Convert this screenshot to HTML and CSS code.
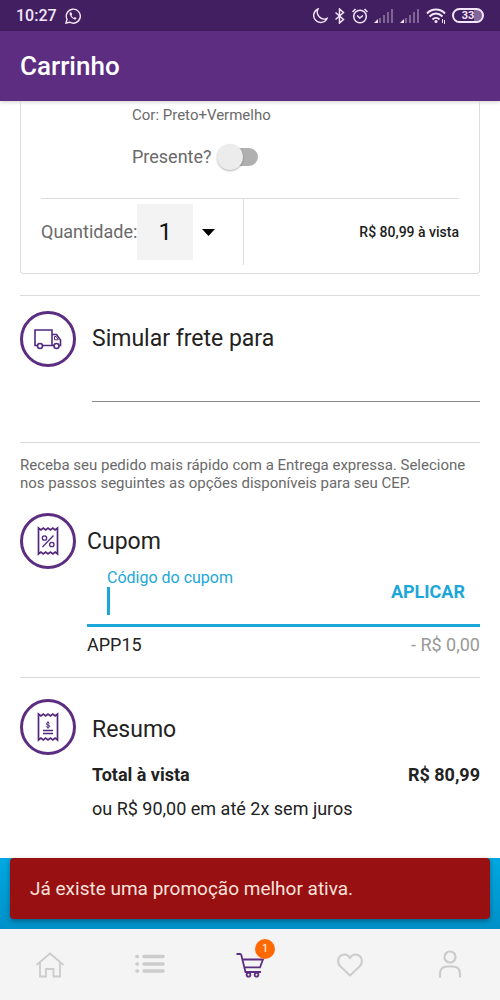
FILE: index.html
```html
<!DOCTYPE html>
<html lang="pt-BR">
<head>
<meta charset="utf-8">
<meta name="viewport" content="width=device-width, initial-scale=1">
<title>Carrinho</title>
<link rel="stylesheet" href="styles.css">
</head>
<body>
<div class="status">
  <div class="status-group">
    <span class="clock">10:27</span>
    <svg width="16" height="16" viewBox="0 0 16 16" fill="none" stroke="currentColor" stroke-width="1.4"><path d="M1 15l1-3.8A7 7 0 1 1 4.800 14.200Z"/><path d="M5.200 4.300c-.7.7-.8 1.600 0 3.200 1 2 2.600 3.400 4.300 3.900 1 .2 2-.5 2-1.500L9.800 9l-1 .9C7.700 9.300 7 8.500 6.500 7.400l.7-.9-.7-1.900Z" fill="currentColor" stroke="none"/></svg>
  </div>
  <div class="status-group status-right">
    <svg width="16" height="16" viewBox="0 0 16 16" fill="none" stroke="currentColor" stroke-width="1.400"><path d="M6 1a7 7 0 1 0 9 9.500A7 7 0 0 1 6 1Z"/></svg>
    <svg width="12" height="16" viewBox="0 0 12 16" fill="none" stroke="currentColor" stroke-width="1.500"><path d="M1.500 4.500l8 7-4 3.500V1l4 3.500-8 7"/></svg>
    <svg width="16" height="16" viewBox="1 0 16 16" fill="none" stroke="currentColor" stroke-width="1.500"><circle cx="9" cy="8.500" r="6.300"/><path d="M6 7.500L8.800 10 12 7.500M1.500 4l3-3M16.500 4l-3-3"/></svg>
    <svg width="20" height="14" viewBox="0 0 20 14" fill="currentColor"><path d="M0 14h4v-4Z"/><g opacity=".35"><path d="M5 9h2v5H5zM9 6h2v8H9zM13 3h2v11h-2zM17 0h2v14h-2z"/></g></svg>
    <svg width="20" height="14" viewBox="0 0 20 14" fill="currentColor"><path d="M0 14h4v-4Z"/><g opacity=".35"><path d="M5 9h2v5H5zM9 6h2v8H9zM13 3h2v11h-2zM17 0h2v14h-2z"/></g></svg>
    <svg width="20" height="16" viewBox="0 0 20 16" fill="none" stroke="currentColor" stroke-width="2"><path d="M1 5.500C6 .3 14 .3 19 5.500M3.500 8.500c4-4 9-4 13 0M6.500 11.500c2-2 5-2 7 0"/><circle cx="10" cy="13.500" r="1.500" fill="currentColor" stroke="none"/><path d="M16.500 11v4M18.500 12v4" stroke-width="1"/></svg>
    <span class="battery">33</span>
  </div>
</div>
<header class="appbar"><h1>Carrinho</h1></header>

<main class="content">
  <section class="item">
    <div class="item-info">
      <p class="item-color">Cor: Preto+Vermelho</p>
      <label class="gift">Presente? <input class="switch" type="checkbox" role="switch"></label>
    </div>
    <div class="item-foot">
      <div class="quantity">
        <label for="qty">Quantidade:</label>
        <select id="qty" class="qty-select"><option>1</option></select>
        <svg width="13" height="7" viewBox="0 0 13 7"><path d="M0 0h13L6.500 7Z" fill="#000"/></svg>
      </div>
      <strong class="item-price">R$ 80,99 à vista</strong>
    </div>
  </section>

  <section class="block shipping">
    <span class="badge">
      <svg width="30" height="24" viewBox="0 0 30 24" fill="none" stroke="currentColor" stroke-width="1.600"><path d="M4.500 18.500H2V3h17v15.500H9.500M19 7.500h4.500L27.500 13v5.500h-1.200M19 18.500h2"/><circle cx="7" cy="19" r="2.500"/><circle cx="23.500" cy="19" r="2.500"/><path d="M21.500 9.500h1.700l2 3.300h-3.700Z" stroke-width="1"/></svg>
    </span>
    <div class="block-body">
      <h2><label for="cep">Simular frete para</label></h2>
      <input id="cep" class="cep" type="text" inputmode="numeric">
    </div>
  </section>

  <section class="coupon-area">
    <p class="note">Receba seu pedido mais rápido com a Entrega expressa. Selecione nos passos seguintes as opções disponíveis para seu CEP.</p>
    <div class="coupon">
      <span class="badge">
        <svg width="24" height="32" viewBox="0 0 24 32" fill="none" stroke="currentColor" stroke-width="1.700"><path d="M2.500 3v26l2.400-2 2.400 2 2.400-2 2.300 2 2.400-2 2.400 2 2.400-2 2.300 2V3l-2.300 2-2.400-2-2.400 2L12 3 9.700 5 7.300 3 4.900 5Z"/><path d="M17.500 10.500l-11 11.500" stroke-width="1.300"/><circle cx="8.500" cy="13" r="2.200" stroke-width="1.300"/><circle cx="15.800" cy="19.500" r="2.200" stroke-width="1.300"/></svg>
      </span>
      <div class="block-body">
        <h2>Cupom</h2>
        <div class="coupon-field">
          <div class="coupon-entry">
            <label for="code">Código do cupom</label>
            <div class="entry-line"><span class="caret"></span><input id="code" type="text"></div>
          </div>
          <button class="apply" type="button">APLICAR</button>
        </div>
        <div class="row"><span>APP15</span><span class="discount">- R$ 0,00</span></div>
      </div>
    </div>
  </section>

  <section class="block summary">
    <span class="badge">
      <svg width="24" height="32" viewBox="0 0 24 32" fill="none" stroke="currentColor" stroke-width="1.700"><path d="M2.500 3v26l2.400-2 2.400 2 2.400-2 2.300 2 2.400-2 2.400 2 2.400-2 2.300 2V3l-2.300 2-2.400-2-2.400 2L12 3 9.700 5 7.300 3 4.900 5Z"/><path d="M7 19.500h10M7 22.500h10" stroke-width="1.300"/><path d="M13.700 12.500c-.4-1.400-3.400-1.200-3.400.3 0 1.600 3.500.8 3.500 2.400 0 1.600-3.200 1.700-3.700.1M12 10.300v7.400" stroke-width="1"/></svg>
    </span>
    <div class="block-body">
      <h2>Resumo</h2>
      <div class="row total"><strong>Total à vista</strong><strong>R$ 80,99</strong></div>
      <p class="installments">ou R$ 90,00 em até 2x sem juros</p>
    </div>
  </section>
</main>

<div class="bottom-bar">
  <div class="snackbar" role="alert">Já existe uma promoção melhor ativa.</div>
</div>
<nav class="tabs">
  <a href="#" aria-label="Início"><svg width="30" height="30" viewBox="0 0 30 30" fill="none" stroke="currentColor" stroke-width="1.800"><path d="M1.500 15L15 3.500 28.500 15M5 12.500v14h6V19h7.500v7.500H25v-14"/></svg></a>
  <a href="#" aria-label="Categorias"><svg width="32" height="30" viewBox="0 0 32 30" fill="none" stroke="currentColor" stroke-width="3.600" stroke-linecap="round"><path d="M3 6.500h.5M10 6.500h19M3 14h.5M10 14h19M3 21h.5M10 21h19"/></svg></a>
  <a href="#" class="active" aria-label="Carrinho"><svg width="30" height="30" viewBox="0 0 30 30" fill="none" stroke="currentColor" stroke-width="1.800"><path d="M1.500 4H5q1 0 1.300 1l4.200 17H26M7.500 9.500H28l-3 7.800H9.500"/><circle cx="13.500" cy="24.700" r="1.900"/><circle cx="21.500" cy="24.700" r="1.900"/></svg><span class="count">1</span></a>
  <a href="#" aria-label="Favoritos"><svg width="30" height="30" viewBox="0 0 30 30" fill="none" stroke="currentColor" stroke-width="2"><path d="M15 25.500L5.500 16.500C1.500 12.500 3 7 6.500 5.200 9.500 3.800 13 4.500 15 8c2-3.500 5.500-4.200 8.500-2.800 3.500 1.800 5 7.300 1 11.300Z" stroke-linejoin="round"/></svg></a>
  <a href="#" aria-label="Conta"><svg width="30" height="30" viewBox="0 0 30 30" fill="none" stroke="currentColor" stroke-width="2.200"><circle cx="15" cy="7" r="5.500"/><path d="M5 27.500V24q0-7.500 7.500-7.500h5Q25 16.500 25 24v3.500"/></svg></a>
</nav>
</body>
</html>
```
FILE: styles.css
```css
* { box-sizing: border-box; }
body {
  margin: 0;
  min-height: 100vh;
  display: flex;
  flex-direction: column;
  background: #fff;
  color: #222;
  font-family: Roboto, "Liberation Sans", sans-serif;
  font-size: 18px;
  line-height: 24px;
}
h1, h2, p { margin: 0; font-weight: 400; }
svg { display: block; flex: none; }
input, select, button { font: inherit; color: inherit; border: 0; border-radius: 0; background: none; padding: 0; outline: 0; }

.status {
  display: flex;
  justify-content: space-between;
  align-items: center;
  height: 31px;
  padding: 0 16px;
  background: #421f60;
  color: #f4e6fa;
}
.status-group { display: flex; align-items: center; gap: 8px; }
.status-right { gap: 6px; }
.clock { font-size: 16px; font-weight: 500; }
.battery {
  width: 32px;
  border: 2px solid currentColor;
  border-radius: 8px;
  background: linear-gradient(90deg, transparent 70%, #80669a 70%);
  font-size: 11px;
  font-weight: 700;
  line-height: 11px;
  text-align: center;
}
.appbar { padding: 18px 20px 17px; background: #5c2d81; color: #fff; box-shadow: 0 1px 4px rgba(0, 0, 0, .2); }
.appbar h1 { font-size: 26px; font-weight: 500; line-height: 35px; }

.content { flex: 1; padding: 0 20px; }
.item {
  padding: 4px 20px 8px;
  border: 1px solid #dcdcdc;
  border-top: 0;
  border-radius: 0 0 4px 4px;
  color: #6a6a6a;
}
.item-info { padding: 0 0 29px 91px; }
.item-color { font-size: 15px; line-height: 20px; margin-bottom: 20px; }
.gift { display: flex; align-items: center; gap: 5px; }
.switch { appearance: none; position: relative; width: 41px; height: 18px; margin: 0; border-radius: 9px; background: linear-gradient(#b0b0b0, #b0b0b0) right / 30px 18px no-repeat; }
.switch::before {
  content: "";
  position: absolute;
  top: -4px;
  left: 0;
  width: 26px;
  height: 26px;
  border-radius: 50%;
  background: #ececec;
  box-shadow: 0 1px 2px rgba(0, 0, 0, .3);
}
.item-foot { display: flex; justify-content: space-between; align-items: center; border-top: 1px solid #dcdcdc; }
.quantity { display: flex; align-items: center; height: 66px; padding-right: 28px; border-right: 1px solid #dcdcdc; }
.qty-select { appearance: none; width: 56px; height: 56px; margin-right: 9px; background: #f3f3f3; color: #111; font-size: 24px; text-align: center; text-align-last: center; }
.item-price { color: #1c1c1c; font-size: 14px; font-weight: 500; }

.block, .coupon { display: flex; }
.block { gap: 16px; }
.block-body { flex: 1; min-width: 0; }
.badge {
  flex: none;
  display: grid;
  place-items: center;
  width: 56px;
  height: 56px;
  border: 3px solid #5c2d81;
  border-radius: 50%;
  color: #52287c;
}
h2 { font-size: 23px; line-height: 32px; }
.shipping { margin-top: 21px; padding: 15px 0 40px; border-top: 1px solid #dcdcdc; }
.shipping h2 { padding-top: 12px; }
.cep { display: block; width: 100%; height: 47px; border-bottom: 1px solid #888; }

.coupon-area { padding: 13px 0 20px; border-top: 1px solid #dcdcdc; border-bottom: 1px solid #dcdcdc; }
.note { color: #6a6a6a; font-size: 15px; line-height: 18px; }
.coupon { gap: 11px; margin-top: 21px; }
.coupon h2 { padding-top: 13px; }
.coupon-field { display: flex; justify-content: space-between; align-items: center; padding: 10px 15px 9px 20px; border-bottom: 3px solid #1da7d9; color: #1da7d9; }
.coupon-entry { flex: 1; font-size: 16px; line-height: 19px; }
.coupon-entry label { display: block; }
.entry-line { display: flex; }
.caret { width: 3px; height: 28px; background: #1da7d9; }
.entry-line input { flex: 1; min-width: 0; }
.apply { font-size: 18px; font-weight: 700; line-height: 24px; }
.row { display: flex; justify-content: space-between; padding-top: 6px; }
.discount { color: #999; }

.summary { padding: 21px 0 32px; }
.summary h2 { padding-top: 15px; }
.summary .row { padding-top: 17px; }
.summary strong { font-weight: 700; }
.installments { padding-top: 10px; }

.bottom-bar { position: relative; height: 71px; background: linear-gradient(#00a8e1, #0090c8); }
.snackbar {
  position: absolute;
  inset: 0 10px 10px;
  display: flex;
  align-items: center;
  padding: 0 20px;
  border-radius: 4px;
  background: #981012;
  color: #fbe3dd;
  font-size: 19px;
  box-shadow: 0 2px 5px rgba(0, 0, 0, .35);
}
.tabs { display: flex; height: 71px; background: #f4f4f4; }
.tabs a { flex: 1; display: flex; align-items: center; justify-content: center; position: relative; color: #ccc; }
.tabs .active { color: #5c2d81; }
.count {
  position: absolute;
  top: 10px;
  left: calc(50% + 5px);
  width: 20px;
  height: 20px;
  border-radius: 50%;
  background: #ff6a00;
  color: #fff;
  font-size: 11px;
  line-height: 20px;
  text-align: center;
}
```
